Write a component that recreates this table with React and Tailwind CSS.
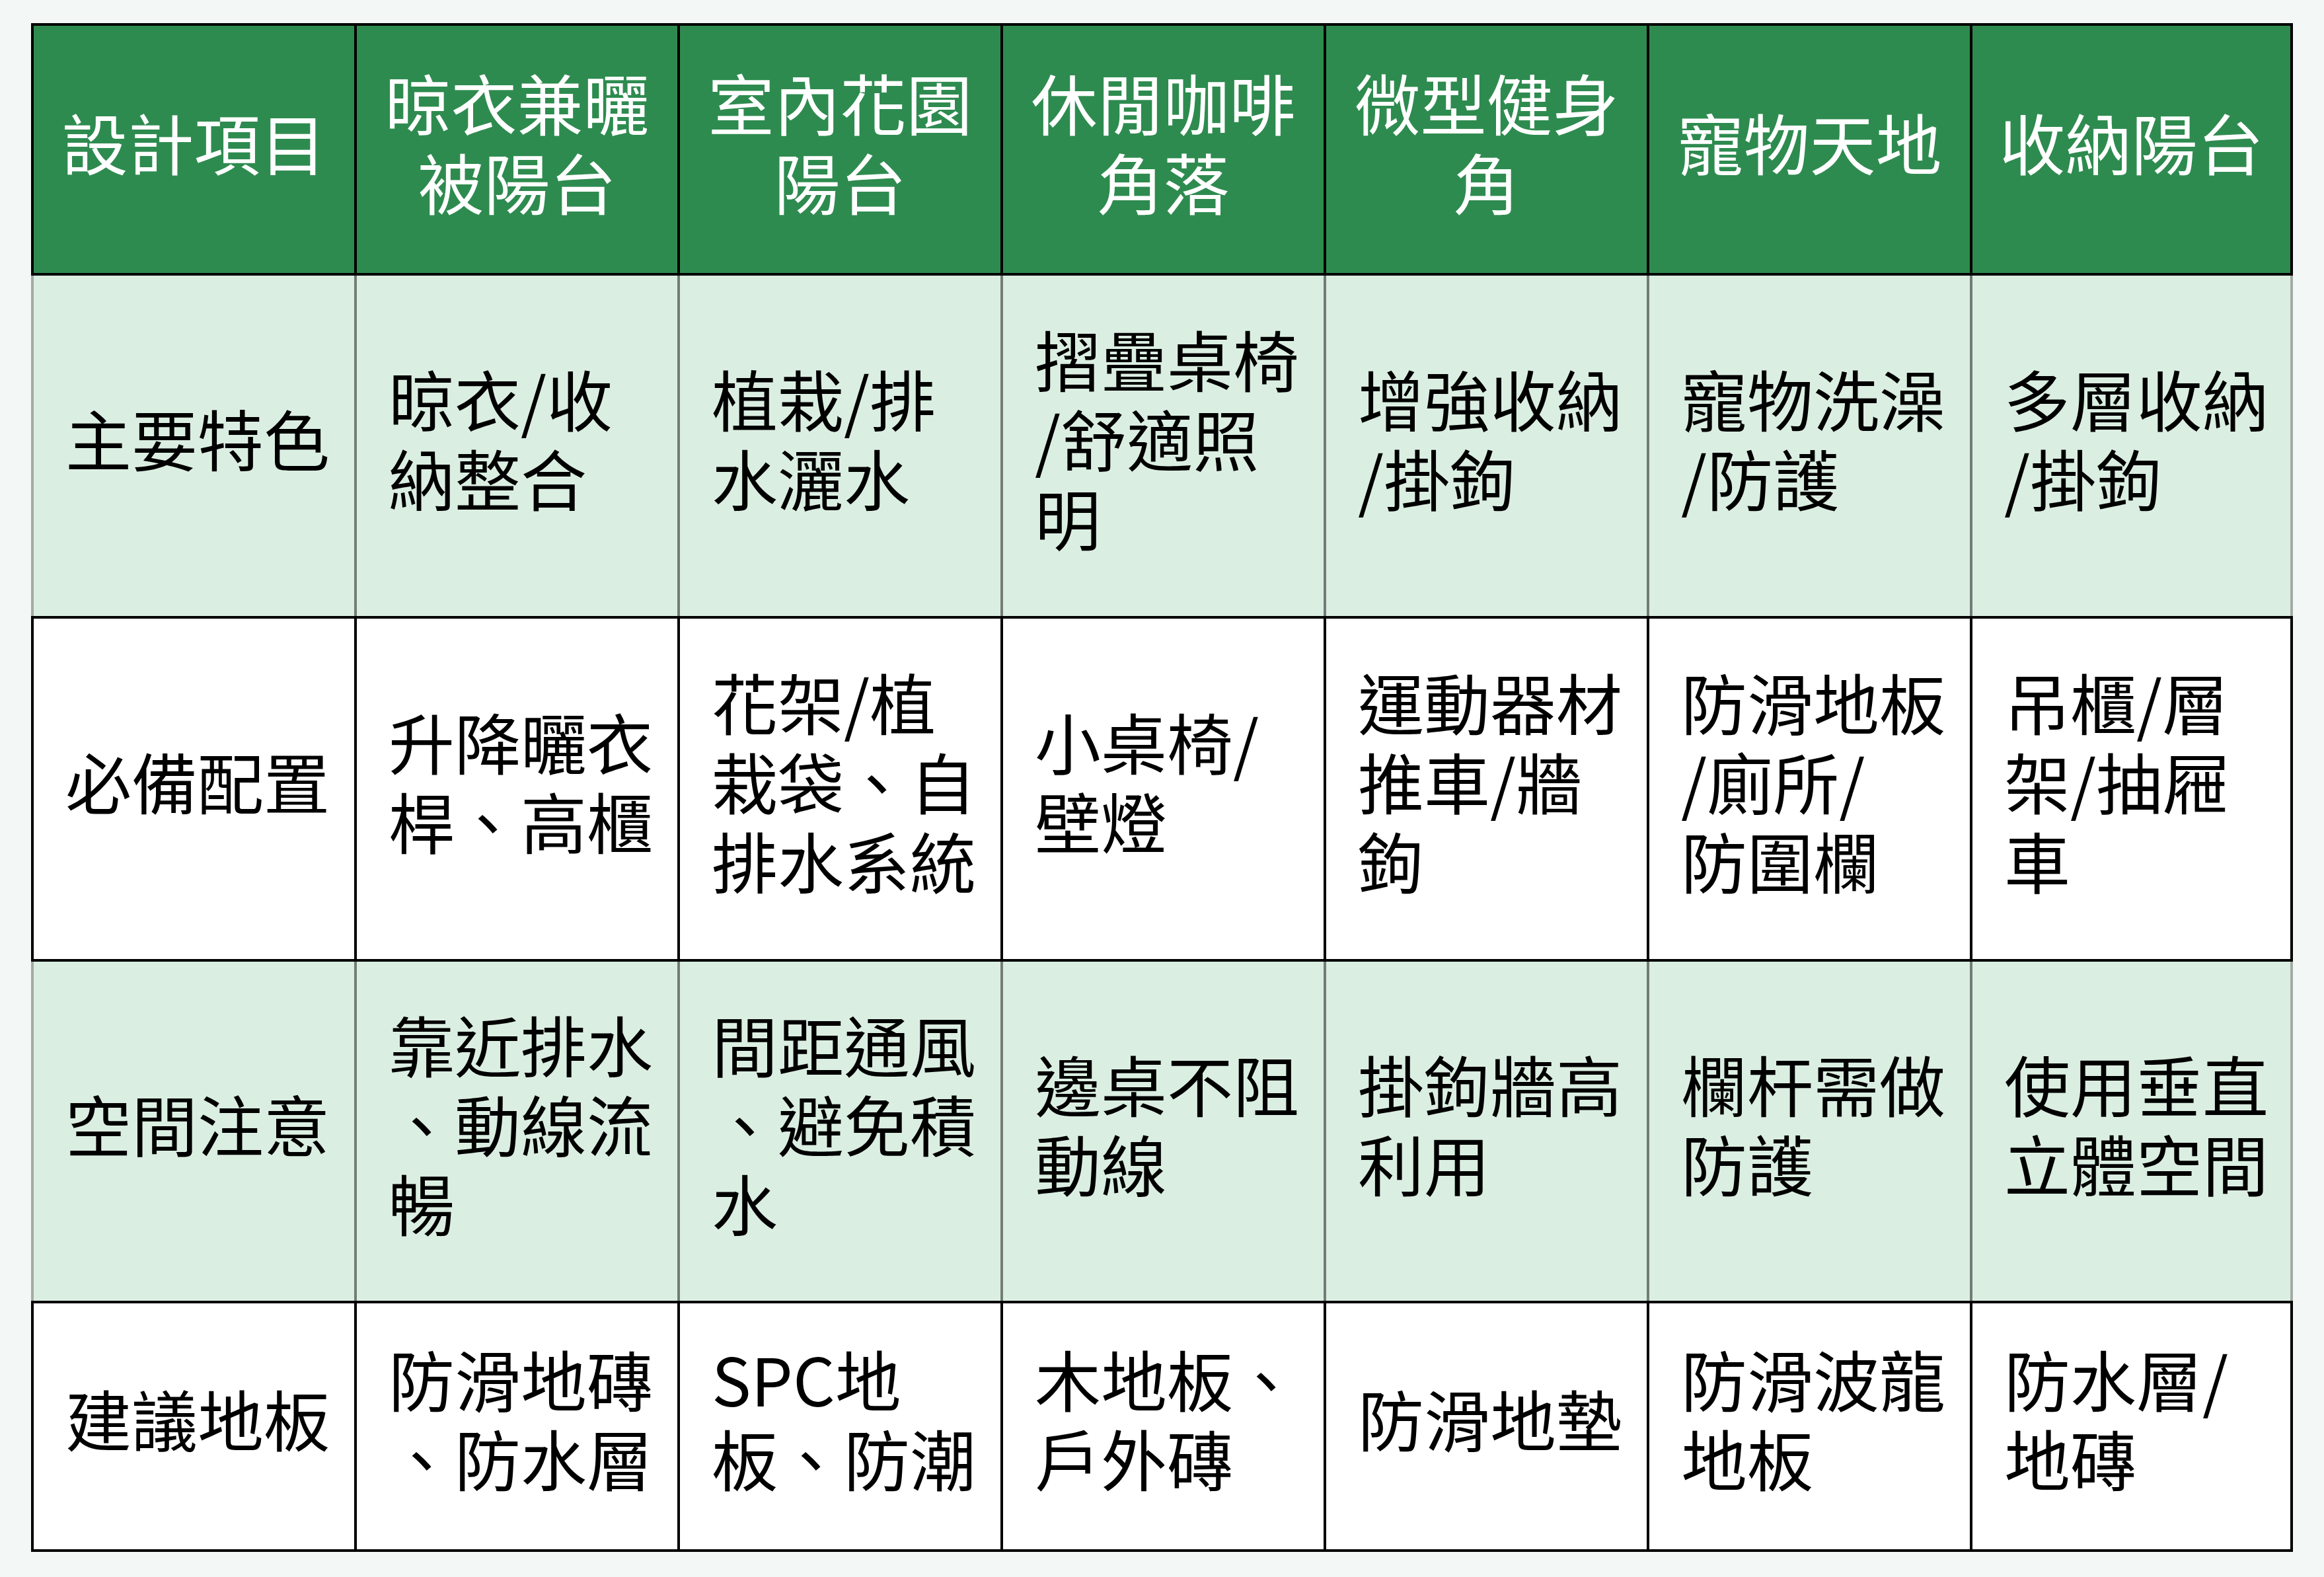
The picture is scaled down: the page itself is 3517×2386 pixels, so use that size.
import React from "react";

const header = [
  ["設計項目"],
  ["晾衣兼曬", "被陽台"],
  ["室內花園", "陽台"],
  ["休閒咖啡", "角落"],
  ["微型健身", "角"],
  ["寵物天地"],
  ["收納陽台"],
];

const rows = [
  {
    green: true,
    h: "h-[519px]",
    cells: [
      ["主要特色"],
      ["晾衣/收", "納整合"],
      ["植栽/排", "水灑水"],
      ["摺疊桌椅", "/舒適照", "明"],
      ["增強收納", "/掛鉤"],
      ["寵物洗澡", "/防護"],
      ["多層收納", "/掛鉤"],
    ],
  },
  {
    green: false,
    h: "h-[519px]",
    cells: [
      ["必備配置"],
      ["升降曬衣", "桿、高櫃"],
      ["花架/植", "栽袋、自", "排水系統"],
      ["小桌椅/", "壁燈"],
      ["運動器材", "推車/牆", "鉤"],
      ["防滑地板", "/廁所/", "防圍欄"],
      ["吊櫃/層", "架/抽屜", "車"],
    ],
  },
  {
    green: true,
    h: "h-[517px]",
    cells: [
      ["空間注意"],
      ["靠近排水", "、動線流", "暢"],
      ["間距通風", "、避免積", "水"],
      ["邊桌不阻", "動線"],
      ["掛鉤牆高", "利用"],
      ["欄杆需做", "防護"],
      ["使用垂直", "立體空間"],
    ],
  },
  {
    green: false,
    h: "h-[376px]",
    cells: [
      ["建議地板"],
      ["防滑地磚", "、防水層"],
      ["SPC地", "板、防潮"],
      ["木地板、", "戶外磚"],
      ["防滑地墊"],
      ["防滑波龍", "地板"],
      ["防水層/", "地磚"],
    ],
  },
];

function greenBorder(i) {
  if (i === 0) return "border-l-4 border-l-[#a4aaa6]";
  if (i === 6) return "border-l-4 border-l-[#737c76] border-r-4 border-r-[#a4aaa6]";
  return "border-l-4 border-l-[#737c76]";
}

function blackBorder(i) {
  if (i === 6) return "border-l-4 border-r-4 border-black";
  return "border-l-4 border-black";
}

export default function App() {
  return (
    <div
      className="min-h-screen w-full bg-[#f3f7f5] pl-[47px] pt-[35px]"
      style={{ fontFamily: '"Noto Sans CJK TC", "Noto Sans", sans-serif' }}
    >
      <div className="w-[3423px] border-t-4 border-black">
        <div className="grid grid-cols-7 h-[378px] border-b-4 border-black bg-[#2e8b4f]">
          {header.map((lines, i) => (
            <div
              key={i}
              className={`${blackBorder(i)} flex flex-col items-center justify-center px-[44px] pb-[24px] text-center text-white text-[100px] leading-[120px]`}
            >
              {lines.map((l, j) => (
                <div key={j} className="whitespace-nowrap">
                  {l}
                </div>
              ))}
            </div>
          ))}
        </div>
        {rows.map((row, r) => (
          <div
            key={r}
            className={`grid grid-cols-7 ${row.h} border-b-4 border-black ${
              row.green ? "bg-[#dbeee2]" : "bg-white"
            }`}
          >
            {row.cells.map((lines, i) => (
              <div
                key={i}
                className={`${
                  row.green ? greenBorder(i) : blackBorder(i)
                } flex flex-col justify-center pl-[48px] pr-[40px] pb-[26px] text-black text-[100px] leading-[120px]`}
              >
                {lines.map((l, j) => (
                  <div key={j} className="whitespace-nowrap">
                    {l}
                  </div>
                ))}
              </div>
            ))}
          </div>
        ))}
      </div>
    </div>
  );
}
